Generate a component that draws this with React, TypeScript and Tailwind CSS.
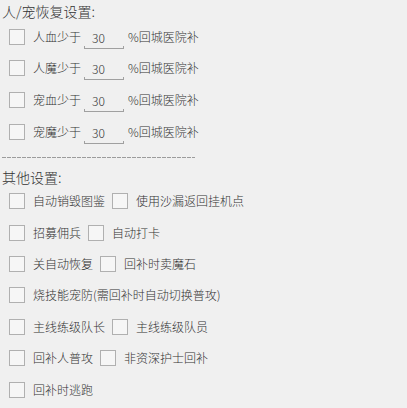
import React from "react";

const font = { fontFamily: '"Noto Sans CJK SC", "Noto Sans", sans-serif' };

function Box() {
  return <div className="w-4 h-4 shrink-0 border border-[#b0b0b0] bg-[#f6f6f6]" />;
}

function Check({ label }: { label: string }) {
  return (
    <div className="flex items-center">
      <Box />
      <span className="ml-2 text-[12px] leading-4 text-[#333] font-light whitespace-nowrap">{label}</span>
    </div>
  );
}

function PercentRow({ label }: { label: string }) {
  return (
    <div className="h-[31.67px] flex items-center pl-[7px]">
      <Box />
      <span className="ml-2 text-[12px] leading-4 text-[#333] font-light">{label}</span>
      <div className="ml-[3px] w-[40px] h-[24px] flex flex-col">
        <span className="pt-[5px] pl-2 text-[12px] leading-4 text-[#333] font-light">30</span>
        <div className="flex-1" />
        <div className="h-[3px] border-x border-b border-[#a0a0a0]" />
      </div>
      <span className="ml-1 text-[12px] leading-4 text-[#333] font-light">%回城医院补</span>
    </div>
  );
}

function CheckRow({ items }: { items: string[] }) {
  return (
    <div className="h-[31.4px] flex items-center gap-[7px] pl-[7px]">
      {items.map((t) => (
        <Check key={t} label={t} />
      ))}
    </div>
  );
}

export default function App() {
  return (
    <div className="w-[407px] h-[408px] bg-[#f0f0f0] pl-[2px] overflow-hidden" style={font}>
      <div className="mt-[1px] h-[20px] text-[14px] leading-[20px] text-[#333] font-light">人/宠恢复设置:</div>
      <PercentRow label="人血少于" />
      <PercentRow label="人魔少于" />
      <PercentRow label="宠血少于" />
      <PercentRow label="宠魔少于" />

      <div className="mt-[9px] w-[193px] h-px bg-[repeating-linear-gradient(to_right,#9c9c9c_0_4px,transparent_4px_5px)]" />

      <div className="mt-[10px] h-[18px] text-[14px] leading-[18px] text-[#333] font-light">其他设置:</div>
      <CheckRow items={["自动销毁图鉴", "使用沙漏返回挂机点"]} />
      <CheckRow items={["招募佣兵", "自动打卡"]} />
      <CheckRow items={["关自动恢复", "回补时卖魔石"]} />
      <CheckRow items={["烧技能宠防(需回补时自动切换普攻)"]} />
      <CheckRow items={["主线练级队长", "主线练级队员"]} />
      <CheckRow items={["回补人普攻", "非资深护士回补"]} />
      <CheckRow items={["回补时逃跑"]} />
    </div>
  );
}
